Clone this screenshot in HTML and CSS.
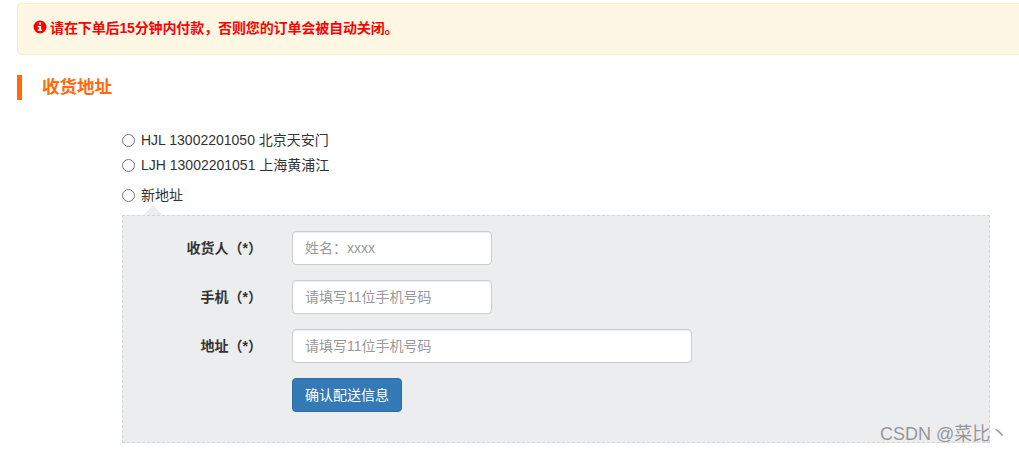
FILE: index.html
```html
<!DOCTYPE html>
<html lang="zh-CN">
<head>
<meta charset="utf-8">
<title>收货地址</title>
<link rel="stylesheet" href="styles.css">
</head>
<body>
<div class="page">
  <div class="alert">
    <svg class="alert-icon" viewBox="0 0 14 14" width="14" height="14" aria-hidden="true">
      <circle cx="7" cy="7" r="6.5" fill="#f00"/>
      <rect x="5.9" y="2.6" width="2.2" height="2.2" fill="#fff8e8"/>
      <path d="M4.8 6h3.3v3.6h1.1v1.3H4.8V9.6h1.1V7.3H4.8z" fill="#fff8e8"/>
    </svg>
    <span class="alert-text">请在下单后15分钟内付款，否则您的订单会被自动关闭。</span>
  </div>
  <h2 class="section-title">收货地址</h2>
  <form class="address-form">
    <label class="radio-row"><input type="radio" name="addr"><span>HJL 13002201050 北京天安门</span></label>
    <label class="radio-row"><input type="radio" name="addr"><span>LJH 13002201051 上海黄浦江</span></label>
    <label class="radio-row radio-new"><input type="radio" name="addr"><span>新地址</span></label>
    <div class="panel">
      <div class="field">
        <span class="field-label">收货人（*）</span>
        <input class="field-input" type="text" placeholder="姓名：xxxx">
      </div>
      <div class="field">
        <span class="field-label">手机（*）</span>
        <input class="field-input" type="text" placeholder="请填写11位手机号码">
      </div>
      <div class="field">
        <span class="field-label">地址（*）</span>
        <input class="field-input field-wide" type="text" placeholder="请填写11位手机号码">
      </div>
      <div class="field">
        <span class="field-label"></span>
        <button class="submit" type="button">确认配送信息</button>
      </div>
    </div>
  </form>
  <div class="watermark">CSDN @菜比丶</div>
</div>
</body>
</html>
```
FILE: styles.css
```css
* { box-sizing: border-box; }
html, body { margin: 0; padding: 0; }
body {
  background: #fff;
  color: #333;
  font-family: "Liberation Sans", "Noto Sans CJK SC", sans-serif;
  font-size: 14px;
  overflow: hidden;
}
.page {
  position: relative;
  width: 1019px;
  height: 453px;
  overflow: hidden;
  padding: 3px 0 0 17px;
}
.alert {
  width: 1040px;
  height: 52px;
  display: flex;
  align-items: center;
  gap: 3px;
  padding: 0 15px 4px;
  background: #fdf7e4;
  border: 1px solid #faebcc;
  border-radius: 4px;
  color: #f00;
  font-size: 14px;
  font-weight: bold;
}
.alert-text { letter-spacing: -0.12px; }
.alert-icon { flex: none; margin-top: -1px; }
.section-title {
  margin: 20px 0 0;
  height: 25px;
  line-height: 25px;
  padding-left: 20px;
  border-left: 5px solid #ff6a0c;
  color: #ff6a0c;
  font-size: 17.5px;
  font-weight: bold;
}
.address-form {
  margin: 28px 0 0 105px;
  width: 868px;
}
.radio-row {
  display: flex;
  align-items: center;
  height: 25px;
  color: #333;
}
.radio-row span { margin-top: -3px; }
.radio-row input {
  appearance: none;
  width: 13px;
  height: 13px;
  margin: 0 6px 0 0;
  flex: none;
  background: #fff;
  border: 1px solid #767676;
  border-radius: 50%;
}
.radio-new { height: 25px; margin-top: 5px; }
.panel {
  position: relative;
  height: 228px;
  margin-top: 7px;
  padding-top: 15px;
  background: #ecedef;
  border: 1px dashed #d5d5d5;
}
.panel::before {
  content: "";
  position: absolute;
  left: 21px;
  top: -11px;
  border-left: 9px solid transparent;
  border-right: 9px solid transparent;
  border-bottom: 10px solid #ecedef;
}
.field {
  display: flex;
  align-items: center;
  height: 34px;
  margin-bottom: 15px;
}
.field-label {
  width: 169px;
  flex: none;
  padding-right: 30px;
  margin-top: -2px;
  text-align: right;
  font-size: 14px;
  font-weight: bold;
  white-space: nowrap;
  color: #333;
}
.field-input {
  width: 200px;
  height: 34px;
  padding: 6px 12px;
  background: #fff;
  border: 1px solid #ccc;
  border-radius: 4px;
  font: inherit;
  color: #555;
  box-shadow: inset 0 1px 1px rgba(0, 0, 0, .075);
}
.field-input::placeholder { color: #999; opacity: 1; }
.field-wide { width: 400px; }
.submit {
  width: 110px;
  height: 34px;
  padding: 0 0 3px;
  background: #337ab7;
  border: 1px solid #2e6da4;
  border-radius: 4px;
  color: #fff;
  font: inherit;
}
.watermark {
  position: absolute;
  left: 880px;
  top: 422px;
  color: rgba(120, 120, 120, .75);
  font-size: 18px;
  line-height: 24px;
  white-space: nowrap;
}
```
